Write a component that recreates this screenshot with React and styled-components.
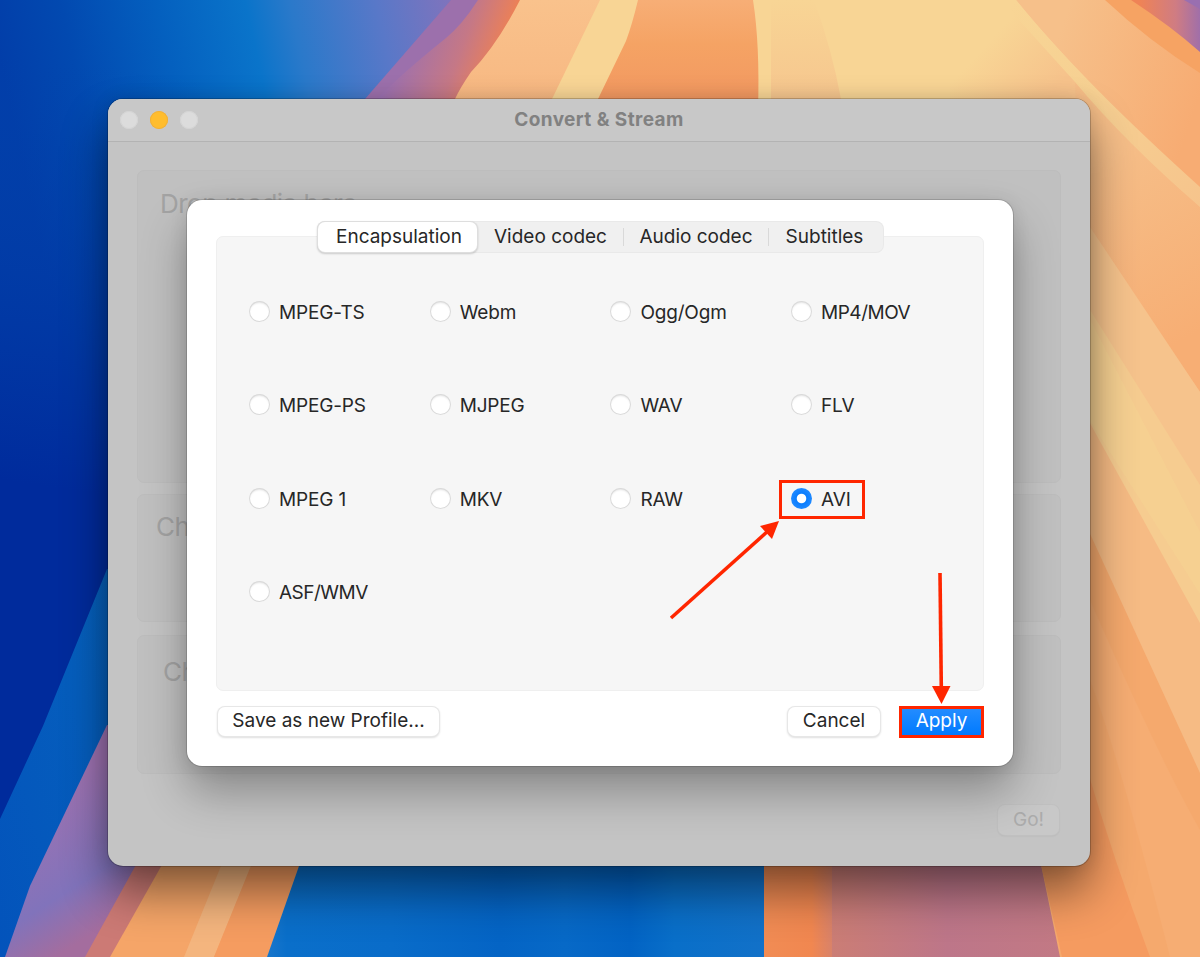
import { useState } from "react";
import styled, { createGlobalStyle } from "styled-components";

const GlobalStyle = createGlobalStyle`
  * {
    box-sizing: border-box;
  }
  body {
    margin: 0;
    overflow: hidden;
    font-family: Inter, "Liberation Sans", sans-serif;
    color: #272727;
  }
  button {
    font-family: inherit;
  }
`;

const Desktop = styled.main`
  position: relative;
  width: 1200px;
  height: 957px;
  padding: 99px 110px 91px 108px;
  overflow: hidden;
  background: #0440a8;
`;

const WallpaperSvg = styled.svg`
  position: absolute;
  inset: 0;
  width: 100%;
  height: 100%;
`;

const Window = styled.section`
  position: relative;
  display: flex;
  flex-direction: column;
  width: 982px;
  height: 767px;
  border-radius: 15px;
  background: #c4c4c4;
  box-shadow: 0 0 0 1px rgba(0, 0, 0, 0.2), 0 26px 46px rgba(0, 0, 0, 0.46),
    0 0 18px rgba(0, 0, 0, 0.12), inset 0 1px 0 rgba(255, 255, 255, 0.25);
`;

const TitleBar = styled.header`
  display: grid;
  grid-template-columns: 90px 1fr 90px;
  align-items: center;
  height: 43px;
  padding: 0 12px;
  border-bottom: 1px solid #b3b3b3;
  border-radius: 15px 15px 0 0;
  background: #c8c8c8;
`;

const Lights = styled.div`
  display: flex;
  align-items: center;
  gap: 12px;
`;

const Light = styled.span`
  width: 18px;
  height: 18px;
  border-radius: 50%;
  background: ${(p) => (p.$active ? "#ffbd2e" : "#dcdcdc")};
  box-shadow: inset 0 0 0 1px ${(p) => (p.$active ? "#f0b03a" : "#d4d4d4")};
`;

const Title = styled.h1`
  margin: 0;
  font-size: 19px;
  line-height: 24px;
  font-weight: 700;
  letter-spacing: 0.42px;
  text-align: center;
  color: #818181;
`;

const WindowBody = styled.div`
  display: flex;
  flex-direction: column;
  padding: 28px 29px 0;
`;

const Group = styled.div`
  height: ${(p) => p.$height}px;
  margin-bottom: ${(p) => p.$gap}px;
  padding: ${(p) => p.$pad};
  border: 1px solid #bdbdbd;
  border-radius: 7px;
  background: #c0c0c0;
`;

const GroupTitle = styled.h2`
  margin: 0;
  font-size: 26px;
  line-height: 32px;
  font-weight: 400;
  letter-spacing: -0.5px;
  color: #a3a3a3;
`;

const GoButton = styled.button`
  align-self: flex-end;
  width: 61px;
  height: 30px;
  margin-right: 2px;
  padding: 0 0 1px;
  border: 0;
  border-radius: 7px;
  background: #c8c8c8;
  box-shadow: 0 0 0 1px #c0c0c0, 0 1px 2px rgba(0, 0, 0, 0.1);
  font-size: 19px;
  color: #acacac;
`;

const Dialog = styled.div`
  position: absolute;
  top: 101px;
  left: 79px;
  display: flex;
  flex-direction: column;
  width: 826px;
  height: 566px;
  padding: 22px 29px 0 30px;
  border-radius: 15px;
  background: #ffffff;
  box-shadow: 0 0 0 1px rgba(0, 0, 0, 0.14), 0 26px 46px rgba(0, 0, 0, 0.3),
    0 2px 18px rgba(0, 0, 0, 0.1);
`;

const Tabs = styled.div`
  position: relative;
  display: grid;
  grid-template-columns: 159px 147px 145px 114px;
  align-self: center;
  width: 565px;
  height: 30px;
  border-radius: 7px;
  background: #f0f0f0;
  box-shadow: 0 0 0 1px #e9e9e9;
`;

const Tab = styled.button`
  display: flex;
  align-items: center;
  justify-content: center;
  position: relative;
  padding: 0 ${(p) => p.$right || 0}px 1px ${(p) => p.$left || 0}px;
  border: 0;
  border-radius: 7px;
  background: ${(p) => (p.$active ? "#ffffff" : "transparent")};
  box-shadow: ${(p) =>
    p.$active
      ? "0 0 0 1px #dedede, 0 1px 2px 1px rgba(0, 0, 0, 0.18)"
      : "none"};
  font-size: 19px;
  color: #272727;

  &:nth-child(n + 3)::before {
    content: "";
    position: absolute;
    left: -1px;
    top: 6px;
    width: 1px;
    height: 18px;
    background: #d9d9d9;
  }
`;

const Panel = styled.div`
  display: grid;
  grid-template-columns: repeat(4, 180.7px);
  grid-auto-rows: 93.3px;
  width: 768px;
  height: 455px;
  margin: -16px 0 0 -1px;
  padding: 63px 0 0 32px;
  border: 1px solid #efefef;
  border-radius: 7px;
  background: #f6f6f6;
`;

const Option = styled.label`
  position: relative;
  display: flex;
  align-items: center;
  align-self: start;
  justify-self: start;
  gap: 9px;
  height: 25px;
  font-size: 19px;
  white-space: nowrap;
  letter-spacing: ${(p) => p.$tracking}px;
`;

const Radio = styled.input`
  appearance: none;
  width: 21px;
  height: 21px;
  margin: -2px 0 0;
  border-radius: 50%;
  background: #ffffff;
  box-shadow: inset 0 0 0 1px #dadada, inset 0 2px 2px rgba(0, 0, 0, 0.1);

  &:checked {
    background: radial-gradient(
      circle,
      #ffffff 4.3px,
      #0a7dfe 5.2px,
      #1d88ff 10px
    );
    box-shadow: none;
  }
`;

const OptionMark = styled.span`
  position: absolute;
  top: -7px;
  left: -12px;
  width: 86px;
  height: 39px;
  border: 3px solid #ff2600;
`;

const Footer = styled.footer`
  display: flex;
  align-items: center;
  height: 32px;
  margin-top: 15px;
`;

const Button = styled.button`
  width: ${(p) => p.$width}px;
  height: 29px;
  margin: -2px 0 0 ${(p) => (p.$push ? "auto" : "1px")};
  padding: 0 0 1px;
  border: 0;
  border-radius: 7px;
  background: #ffffff;
  box-shadow: 0 0 0 1px #e7e7e7, 0 1px 2px 1px rgba(0, 0, 0, 0.13);
  font-size: 19px;
  color: #272727;
`;

const ApplyButton = styled.button`
  width: 85px;
  height: 32px;
  margin-left: 19px;
  padding: 0 0 3px;
  border: 3px solid #ff2600;
  background: linear-gradient(#238cff, #007aff);
  font-size: 19px;
  color: #ffffff;
`;

const Arrows = styled.svg`
  position: absolute;
  inset: 0;
  width: 1200px;
  height: 957px;
  pointer-events: none;
`;

const formats = [
  "MPEG-TS",
  "Webm",
  "Ogg/Ogm",
  "MP4/MOV",
  "MPEG-PS",
  "MJPEG",
  "WAV",
  "FLV",
  "MPEG 1",
  "MKV",
  "RAW",
  "AVI",
  "ASF/WMV",
];

const tabs = [
  { name: "Encapsulation", left: 3 },
  { name: "Video codec" },
  { name: "Audio codec", right: 1 },
  { name: "Subtitles", right: 3 },
];

function Wallpaper() {
  return (
    <WallpaperSvg viewBox="0 0 1200 957" preserveAspectRatio="none">
      <defs>
        <linearGradient id="sky" gradientUnits="userSpaceOnUse" x1="0" y1="60" x2="465" y2="-40">
          <stop offset="0" stopColor="#023ea9" />
          <stop offset="0.15" stopColor="#0249b0" />
          <stop offset="0.35" stopColor="#0460bf" />
          <stop offset="0.53" stopColor="#0a74ca" />
          <stop offset="0.62" stopColor="#2a79ca" />
          <stop offset="0.8" stopColor="#5978c8" />
          <stop offset="1" stopColor="#8b72b9" />
        </linearGradient>
        <linearGradient id="deep" gradientUnits="userSpaceOnUse" x1="60" y1="60" x2="0" y2="480">
          <stop offset="0" stopColor="#0144ac" stopOpacity="0" />
          <stop offset="0.5" stopColor="#013aa5" stopOpacity="0.7" />
          <stop offset="1" stopColor="#002b9c" />
        </linearGradient>
        <linearGradient id="band" x1="1" y1="0" x2="0" y2="1">
          <stop offset="0" stopColor="#0663be" />
          <stop offset="1" stopColor="#0353bb" />
        </linearGradient>
        <linearGradient id="violet" gradientUnits="userSpaceOnUse" x1="40" y1="800" x2="115" y2="920">
          <stop offset="0" stopColor="#9d72b1" />
          <stop offset="0.65" stopColor="#8173bb" />
          <stop offset="1" stopColor="#a46d9e" />
        </linearGradient>
        <linearGradient id="mauve" gradientUnits="userSpaceOnUse" x1="400" y1="40" x2="495" y2="75">
          <stop offset="0" stopColor="#9a70b1" />
          <stop offset="0.6" stopColor="#c57886" />
          <stop offset="1" stopColor="#ef8153" />
        </linearGradient>
        <linearGradient id="peach" x1="0" y1="0" x2="0" y2="1">
          <stop offset="0" stopColor="#f9c28c" />
          <stop offset="1" stopColor="#f7b680" />
        </linearGradient>
        <linearGradient id="orange" x1="0" y1="0" x2="0" y2="1">
          <stop offset="0" stopColor="#f7ae76" />
          <stop offset="0.4" stopColor="#f5a364" />
          <stop offset="1" stopColor="#f29660" />
        </linearGradient>
        <linearGradient id="haze" x1="0" y1="0" x2="0" y2="1">
          <stop offset="0" stopColor="#f6c68e" stopOpacity="0" />
          <stop offset="1" stopColor="#f6c68e" />
        </linearGradient>
        <linearGradient id="wedge" gradientUnits="userSpaceOnUse" x1="1000" y1="30" x2="1060" y2="85">
          <stop offset="0" stopColor="#f6c28b" stopOpacity="0" />
          <stop offset="1" stopColor="#f6c28b" />
        </linearGradient>
        <linearGradient id="corner" gradientUnits="userSpaceOnUse" x1="1140" y1="12" x2="1200" y2="12">
          <stop offset="0" stopColor="#ef8356" />
          <stop offset="0.6" stopColor="#cf7c83" />
          <stop offset="1" stopColor="#a06fa9" />
        </linearGradient>
        <linearGradient id="ray" gradientUnits="userSpaceOnUse" x1="1050" y1="60" x2="1195" y2="110">
          <stop offset="0" stopColor="#f6c08a" />
          <stop offset="1" stopColor="#f7ac73" />
        </linearGradient>
        <linearGradient id="rayLow" gradientUnits="userSpaceOnUse" x1="1100" y1="160" x2="1200" y2="330">
          <stop offset="0" stopColor="#f6be88" />
          <stop offset="1" stopColor="#f7ae74" />
        </linearGradient>
        <linearGradient id="strip" x1="0" y1="0" x2="1" y2="1">
          <stop offset="0" stopColor="#f8d595" />
          <stop offset="0.45" stopColor="#f6d092" />
          <stop offset="1" stopColor="#f6c48c" />
        </linearGradient>
        <linearGradient id="floor" x1="0" y1="0" x2="1" y2="0">
          <stop offset="0" stopColor="#1876cb" />
          <stop offset="0.04" stopColor="#0a6fca" />
          <stop offset="0.25" stopColor="#096cc9" />
          <stop offset="0.47" stopColor="#0464c5" />
          <stop offset="0.6" stopColor="#0769c7" />
          <stop offset="0.73" stopColor="#0263c4" />
          <stop offset="0.82" stopColor="#096fc9" />
          <stop offset="1" stopColor="#1271c8" />
        </linearGradient>
        <linearGradient id="floorOrange" x1="0" y1="0" x2="1" y2="0">
          <stop offset="0" stopColor="#f18c54" />
          <stop offset="0.7" stopColor="#f18750" />
          <stop offset="1" stopColor="#d98269" />
        </linearGradient>
        <linearGradient id="floorMauve" x1="0" y1="0" x2="1" y2="0">
          <stop offset="0" stopColor="#cb7d75" />
          <stop offset="0.5" stopColor="#bd7689" />
          <stop offset="1" stopColor="#c27984" />
        </linearGradient>
      </defs>

      <rect width="560" height="957" fill="url(#sky)" />
      <rect x="1000" width="200" height="957" fill="#f6bd85" />
      <rect y="60" width="200" height="800" fill="url(#deep)" />
      <path d="M107 569 43 726 0 819V957H120V569Z" fill="url(#band)" />
      <path d="M107 725 30 886 5 957H100L150 866V725Z" fill="url(#violet)" />
      <path d="M137 863 85 957H130L180 863Z" fill="#cc7a75" />
      <path d="M163 863 110 957H300V863Z" fill="#f5a568" />
      <path d="M221 866 184 957H214L251 866Z" fill="#f4b57e" />
      <path d="M251 866 214 957H267L299 866Z" fill="#f59c60" />
      <path d="M299 866 267 957H764V866Z" fill="url(#floor)" />
      <path d="M764 860H832V957H764Z" fill="url(#floorOrange)" />
      <path d="M832 860H1050L1062 957H832Z" fill="url(#floorMauve)" />

      <path d="M451 0 365 99V120H460L530 0Z" fill="#9c70ac" />
      <path d="M478 0Q462 25 446 38Q400 75 377 99V120H460L530 0Z" fill="url(#mauve)" />
      <path d="M520 0Q497 45 471 72Q460 88 455 99V120H620V0Z" fill="url(#peach)" />
      <path d="M600 0 552 99V120H1090V0Z" fill="#f8d595" />
      <path d="M638 0Q632 25 626 41L598 99V110H758Q760 45 753 0Z" fill="url(#orange)" />
      <path d="M771 0H814Q832 50 841 99H771Z" fill="url(#haze)" />
      <path d="M990 0H1016L1095 95V120H950V40Z" fill="url(#wedge)" />

      <path d="M1075 82 1200 207V392L1080 218Z" fill="url(#rayLow)" />
      <path d="M1016 0H1200V190Q1080 79 1016 0Z" fill="url(#ray)" />
      <path d="M1105 0Q1150 42 1200 73V0Z" fill="#f6a363" />
      <path d="M1131 0Q1172 27 1200 52V0Z" fill="url(#corner)" />
      <path d="M1184 0 1200 9V0Z" fill="#996fb0" />
      <path d="M1016 0Q1080 79 1200 187V207Q1125 142 1075 82L1010 10Z" fill="url(#strip)" />

      <path d="M1080 212 1200 392V488L1080 297Z" fill="#f6c38c" />
      <path d="M1080 294 1200 485V626L1080 408Z" fill="#f6cc90" />
      <path d="M1080 300 1200 532V594L1080 405Z" fill="#f6d392" opacity="0.55" />
      <path d="M1080 405 1200 623V776L1080 515Z" fill="#f6bb84" />
      <path d="M1080 512 1200 773V957H1060L1040 860H1080Z" fill="#f5a96d" />
      <path d="M1090 600Q1160 760 1200 830V957H1170Q1120 760 1090 680Z" fill="#f6ad73" />
      <path d="M1080 745Q1110 850 1150 957H1062L1040 860Z" fill="#f59b60" />
    </WallpaperSvg>
  );
}

export default function App() {
  const [tab, setTab] = useState("Encapsulation");
  const [format, setFormat] = useState("AVI");

  return (
    <>
      <GlobalStyle />
      <Desktop>
        <Wallpaper />
        <Window>
          <TitleBar>
            <Lights>
              <Light />
              <Light $active />
              <Light />
            </Lights>
            <Title>Convert &amp; Stream</Title>
          </TitleBar>
          <WindowBody>
            <Group $height={313} $gap={11} $pad="17px 22px">
              <GroupTitle>Drop media here</GroupTitle>
            </Group>
            <Group $height={128} $gap={13} $pad="16px 18px">
              <GroupTitle>Choose Profile</GroupTitle>
            </Group>
            <Group $height={139} $gap={31} $pad="20px 25px">
              <GroupTitle>Choose Destination</GroupTitle>
            </Group>
            <GoButton>Go!</GoButton>
          </WindowBody>
          <Dialog>
            <Tabs>
              {tabs.map(({ name, left, right }) => (
                <Tab
                  key={name}
                  $active={name === tab}
                  $left={left}
                  $right={right}
                  onClick={() => setTab(name)}
                >
                  {name}
                </Tab>
              ))}
            </Tabs>
            <Panel>
              {formats.map((name) => (
                <Option key={name} $tracking={/\/MOV|\/WMV/.test(name) ? -0.5 : -0.17}>
                  <Radio
                    type="radio"
                    name="format"
                    checked={name === format}
                    onChange={() => setFormat(name)}
                  />
                  {name}
                  {name === "AVI" && <OptionMark />}
                </Option>
              ))}
            </Panel>
            <Footer>
              <Button $width={221}>Save as new Profile...</Button>
              <Button $width={92} $push>
                Cancel
              </Button>
              <ApplyButton>Apply</ApplyButton>
            </Footer>
          </Dialog>
        </Window>
        <Arrows viewBox="0 0 1200 957" fill="#ff2600" stroke="#ff2600">
          <path d="M671 618 768 531" strokeWidth="3.6" />
          <path d="M779 521 760 526 772 539Z" stroke="none" />
          <path d="M940 573 941.3 688" strokeWidth="3.6" />
          <path d="M941.5 704 932 686H950.5Z" stroke="none" />
        </Arrows>
      </Desktop>
    </>
  );
}
